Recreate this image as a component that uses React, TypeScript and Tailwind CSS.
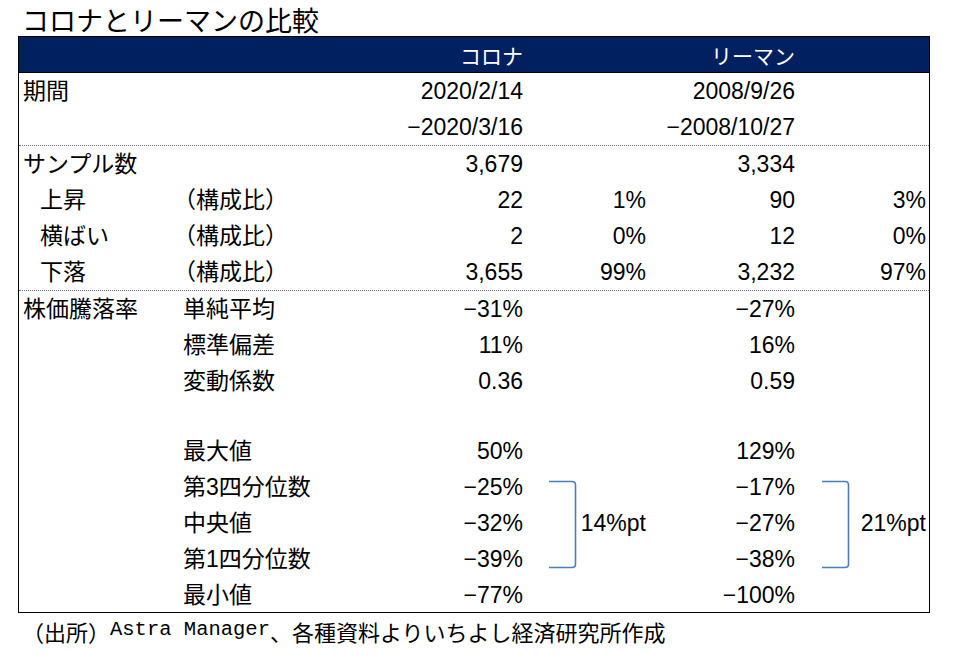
import React from "react";

const FONT = { fontFamily: '"Liberation Sans", "Noto Sans CJK JP", sans-serif' };
const CJK = { fontFamily: '"Noto Sans CJK JP", sans-serif' };

type Row = {
  a?: string;
  indent?: boolean;
  b?: string;
  v1?: string;
  p1?: string;
  v2?: string;
  p2?: string;
  h?: string;
};

const section1: Row[] = [
  { a: "期間", v1: "2020/2/14", v2: "2008/9/26" },
  { v1: "−2020/3/16", v2: "−2008/10/27" },
];

const section2: Row[] = [
  { a: "サンプル数", v1: "3,679", v2: "3,334" },
  { a: "上昇", indent: true, b: "（構成比）", v1: "22", p1: "1%", v2: "90", p2: "3%" },
  { a: "横ばい", indent: true, b: "（構成比）", v1: "2", p1: "0%", v2: "12", p2: "0%" },
  { a: "下落", indent: true, b: "（構成比）", v1: "3,655", p1: "99%", v2: "3,232", p2: "97%" },
];

const section3: Row[] = [
  { a: "株価騰落率", b: "単純平均", v1: "−31%", v2: "−27%" },
  { b: "標準偏差", v1: "11%", v2: "16%" },
  { b: "変動係数", v1: "0.36", v2: "0.59" },
  { h: "h-[34px]" },
  { b: "最大値", v1: "50%", v2: "129%" },
  { b: "第3四分位数", v1: "−25%", v2: "−17%" },
  { b: "中央値", v1: "−32%", p1: "14%pt", v2: "−27%", p2: "21%pt" },
  { b: "第1四分位数", v1: "−39%", v2: "−38%" },
  { b: "最小値", v1: "−77%", v2: "−100%", h: "h-[35px] pt-[2px]" },
];

function TableRow({ row }: { row: Row }) {
  return (
    <div
      className={`grid grid-cols-[164px_200px_140px_123px_149px_131px] items-center text-[23px] leading-none text-black ${
        row.h ?? "h-[36px]"
      }`}
    >
      <div className={row.indent ? "pl-[21px]" : "pl-[4px]"}>{row.a}</div>
      <div className={row.b?.startsWith("（") ? "-ml-[10px]" : ""}>{row.b}</div>
      <div className="text-right">{row.v1}</div>
      <div className="text-right">{row.p1}</div>
      <div className="text-right">{row.v2}</div>
      <div className="text-right">{row.p2}</div>
    </div>
  );
}

function Bracket({ left }: { left: number }) {
  return (
    <svg
      className="absolute"
      style={{ left, top: 443 }}
      width="30"
      height="90"
      viewBox="0 0 30 90"
      fill="none"
    >
      <path
        d="M1 1.5 H24 Q27.5 1.5 27.5 5 V84 Q27.5 87.5 24 87.5 H1"
        stroke="#4a7ebb"
        strokeWidth="1.6"
      />
    </svg>
  );
}

export default function App() {
  return (
    <div className="w-[960px] h-[666px] bg-white overflow-hidden" style={FONT}>
      {/* Title */}
      <div className="h-[36px] pl-[22px] pt-[5px] text-[27px] leading-[30px] text-black" style={CJK}>
        コロナとリーマンの比較
      </div>

      {/* Table */}
      <div className="relative ml-[18px] w-[912px] border border-black">
        <div className="grid h-[36px] grid-cols-[164px_200px_140px_123px_149px_131px] items-center border-b border-black bg-[#002060] text-[21px] leading-none text-white">
          <div />
          <div />
          <div className="pt-[3px] text-right">コロナ</div>
          <div />
          <div className="pt-[3px] text-right">リーマン</div>
          <div />
        </div>

        {section1.map((r, i) => (
          <TableRow key={"s1" + i} row={r} />
        ))}
        <div className="border-t border-dotted border-gray-500" />
        {section2.map((r, i) => (
          <TableRow key={"s2" + i} row={r} />
        ))}
        <div className="border-t border-dotted border-gray-500" />
        {section3.map((r, i) => (
          <TableRow key={"s3" + i} row={r} />
        ))}

        <Bracket left={529} />
        <Bracket left={802} />
      </div>

      {/* Source */}
      <div className="flex h-[35px] items-center pl-[22px] text-[22px] leading-none text-black" style={CJK}>
        <span>（出所）</span>
        <span className="text-[20.5px]" style={{ fontFamily: '"Liberation Mono", monospace' }}>
          Astra Manager
        </span>
        <span>、各種資料よりいちよし経済研究所作成</span>
      </div>
    </div>
  );
}
